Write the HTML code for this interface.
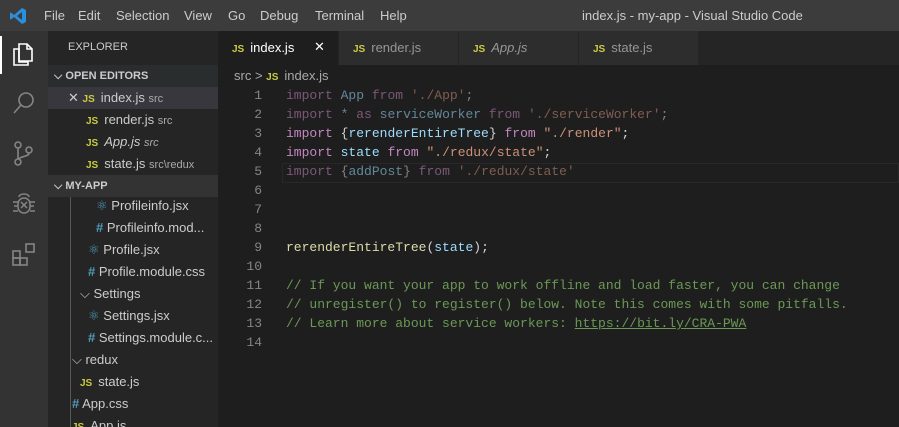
<!DOCTYPE html><html><head><style>
*{margin:0;padding:0;box-sizing:border-box}
body{width:899px;height:427px;overflow:hidden;background:#1e1e1e;font-family:"Liberation Sans",sans-serif;position:relative}
.a{position:absolute;white-space:nowrap}
#title{left:0;top:0;width:899px;height:31px;background:#3c3c3c;color:#ccc;font-size:13px}
#act{left:0;top:31px;width:48px;height:396px;background:#333}
#side{left:48px;top:31px;width:170px;height:396px;background:#252526;color:#ccc;font-size:13px;overflow:hidden}
#tabs{left:218px;top:31px;width:681px;height:34px;background:#252526}
.tab{position:absolute;top:0;height:34px;width:119px;background:#2d2d2d;color:#969696;font-size:13px;padding:9px 0 0 14px}
.js{color:#cbcb41;font-weight:bold;font-size:10px;margin-right:6px}
.code{font-family:"Liberation Mono",monospace;font-size:13px}
.ln{color:#858585;width:40px;text-align:right;left:222px}
.k{color:#c586c0}.v{color:#9cdcfe}.s{color:#ce9178}.f{color:#dcdcaa}.c{color:#6a9955}.p{color:#d4d4d4}
.dim{opacity:.55}
.row{position:absolute;left:0;width:170px;height:22px;line-height:22px}
.cssi{color:#519aba;font-weight:bold}
</style></head><body>
<div class="a" id="title">
<svg class="a" style="left:9px;top:7px" width="18" height="18" viewBox="0 0 18 18"><path d="M13 1 L17 3 V15 L13 17 L5 10 L2 12.5 L1 12 V6 L2 5.5 L5 8 Z M13 5 L8 9 L13 13Z" fill="#2a8fdd" fill-rule="evenodd"/></svg>
<span class="a" style="left:44px;top:8px">File</span><span class="a" style="left:78px;top:8px">Edit</span><span class="a" style="left:116px;top:8px">Selection</span><span class="a" style="left:184px;top:8px">View</span><span class="a" style="left:228px;top:8px">Go</span><span class="a" style="left:260px;top:8px">Debug</span><span class="a" style="left:315px;top:8px">Terminal</span><span class="a" style="left:380px;top:8px">Help</span>
<span class="a" style="left:582px;top:8px">index.js - my-app - Visual Studio Code</span>
</div>
<div class="a" id="act">
<div class="a" style="left:0;top:5px;width:2px;height:38px;background:#fff"></div>
<svg class="a" style="left:12px;top:10px" width="24" height="26" viewBox="0 0 24 26" fill="none" stroke="#fff" stroke-width="1.6"><path d="M2 8 H7 V21 H16 V24 H2 Z"/><path d="M7 3 H15 L20 8 V20 H7 Z"/><path d="M15 3 V8 H20"/></svg>
<svg class="a" style="left:12px;top:60px" width="24" height="24" viewBox="0 0 24 24" fill="none" stroke="#858585" stroke-width="1.6"><circle cx="14" cy="9" r="7"/><path d="M9 14 L2 22"/></svg>
<svg class="a" style="left:12px;top:110px" width="24" height="26" viewBox="0 0 24 26" fill="none" stroke="#858585" stroke-width="1.6"><circle cx="6" cy="4" r="3"/><circle cx="6" cy="21" r="3"/><circle cx="17" cy="9" r="3"/><path d="M6 7 V18 M17 12 C17 16 8 15 7 18"/></svg>
<svg class="a" style="left:11px;top:160px" width="26" height="26" viewBox="0 0 26 26" fill="none" stroke="#858585" stroke-width="1.5"><path d="M8 6 C8 2 18 2 18 6"/><rect x="7" y="7" width="12" height="15" rx="6"/><path d="M10 11 L16 17 M16 11 L10 17 M2 11 H7 M19 11 H24 M2 20 H7 M19 20 H24 M3 15 H7 M19 15 H23"/></svg>
<svg class="a" style="left:11px;top:211px" width="26" height="26" viewBox="0 0 26 26" fill="none" stroke="#858585" stroke-width="1.6"><rect x="2" y="9" width="7" height="7"/><rect x="2" y="16" width="7" height="7"/><rect x="9" y="16" width="7" height="7"/><rect x="15" y="2" width="8" height="8"/></svg>
</div>
<div class="a" id="side">
<div class="a" style="left:20px;top:10px;font-size:11px">EXPLORER</div>
<div class="row" style="top:34px;background:#2a2d2e;font-weight:bold;font-size:11px;padding-left:6px">⌵ OPEN EDITORS</div>
<div class="row" style="top:56px;background:#37373d;padding-left:20px">✕ <span class="js">JS</span>index.js <span style="font-size:11px;color:#aaa">src</span></div>
<div class="row" style="top:78px;padding-left:38px"><span class="js">JS</span>render.js <span style="font-size:11px;color:#aaa">src</span></div>
<div class="row" style="top:100px;padding-left:38px"><span class="js">JS</span><i>App.js</i> <i style="font-size:11px;color:#aaa">src</i></div>
<div class="row" style="top:122px;padding-left:38px"><span class="js">JS</span>state.js <span style="font-size:11px;color:#aaa">src\redux</span></div>
<div class="row" style="top:144px;background:#333;font-weight:bold;font-size:11px;padding-left:6px">⌵ MY-APP</div>
<div class="a" style="left:22px;top:166px;width:1px;height:240px;background:#585858"></div>
<div class="row" style="top:164px;padding-left:48px"><span style="color:#519aba">⚛</span> Profileinfo.jsx</div>
<div class="row" style="top:186px;padding-left:48px"><span class="cssi">#</span> Profileinfo.mod...</div>
<div class="row" style="top:208px;padding-left:40px"><span style="color:#519aba">⚛</span> Profile.jsx</div>
<div class="row" style="top:230px;padding-left:40px"><span class="cssi">#</span> Profile.module.css</div>
<div class="row" style="top:252px;padding-left:32px">⌵ Settings</div>
<div class="row" style="top:274px;padding-left:40px"><span style="color:#519aba">⚛</span> Settings.jsx</div>
<div class="row" style="top:296px;padding-left:40px"><span class="cssi">#</span> Settings.module.c...</div>
<div class="row" style="top:318px;padding-left:24px">⌵ redux</div>
<div class="row" style="top:340px;padding-left:32px"><span class="js">JS</span>state.js</div>
<div class="row" style="top:362px;padding-left:24px"><span class="cssi">#</span> App.css</div>
<div class="row" style="top:384px;padding-left:24px"><span class="js">JS</span>App.js</div>
</div>
<div class="a" id="tabs">
<div class="tab" style="left:0;background:#1e1e1e;color:#fff;width:120px"><span class="js">JS</span>index.js<span style="position:absolute;left:96px;top:8px">✕</span></div>
<div class="tab" style="left:121px"><span class="js">JS</span>render.js</div>
<div class="tab" style="left:241px"><span class="js">JS</span><i>App.js</i></div>
<div class="tab" style="left:361px"><span class="js">JS</span>state.js</div>
</div>
<div class="a" style="left:234px;top:68px;color:#a9a9a9;font-size:13px">src &gt; <span class="js">JS</span>index.js</div>
<div class="a" style="left:282px;top:163px;width:617px;height:20px;border:1px solid #282828"></div>
<div class="code">
<div class="a ln" style="top:88px">1</div><div class="a ln" style="top:107px">2</div><div class="a ln" style="top:126px">3</div><div class="a ln" style="top:145px">4</div><div class="a ln" style="top:164px">5</div><div class="a ln" style="top:183px">6</div><div class="a ln" style="top:202px">7</div><div class="a ln" style="top:221px">8</div><div class="a ln" style="top:240px">9</div><div class="a ln" style="top:259px">10</div><div class="a ln" style="top:278px">11</div><div class="a ln" style="top:297px">12</div><div class="a ln" style="top:316px">13</div><div class="a ln" style="top:335px">14</div>
<div class="a dim" style="left:286px;top:88px"><span class="k">import</span> <span class="v">App</span> <span class="k">from</span> <span class="s">'./App'</span><span class="p">;</span></div>
<div class="a dim" style="left:286px;top:107px"><span class="k">import</span> <span class="v">*</span> <span class="k">as</span> <span class="v">serviceWorker</span> <span class="k">from</span> <span class="s">'./serviceWorker'</span><span class="p">;</span></div>
<div class="a" style="left:286px;top:126px"><span class="k">import</span> <span class="p">{</span><span class="v">rerenderEntireTree</span><span class="p">}</span> <span class="k">from</span> <span class="s">"./render"</span><span class="p">;</span></div>
<div class="a" style="left:286px;top:145px"><span class="k">import</span> <span class="v">state</span> <span class="k">from</span> <span class="s">"./redux/state"</span><span class="p">;</span></div>
<div class="a dim" style="left:286px;top:164px"><span class="k">import</span> <span class="p">{</span><span class="v">addPost</span><span class="p">}</span> <span class="k">from</span> <span class="s">'./redux/state'</span></div>
<div class="a" style="left:286px;top:240px"><span class="f">rerenderEntireTree</span><span class="p">(</span><span class="v">state</span><span class="p">);</span></div>
<div class="a c" style="left:286px;top:278px">// If you want your app to work offline and load faster, you can change</div>
<div class="a c" style="left:286px;top:297px">// unregister() to register() below. Note this comes with some pitfalls.</div>
<div class="a c" style="left:286px;top:316px">// Learn more about service workers: <u>https://bit.ly/CRA-PWA</u></div>
</div>
</body></html>
